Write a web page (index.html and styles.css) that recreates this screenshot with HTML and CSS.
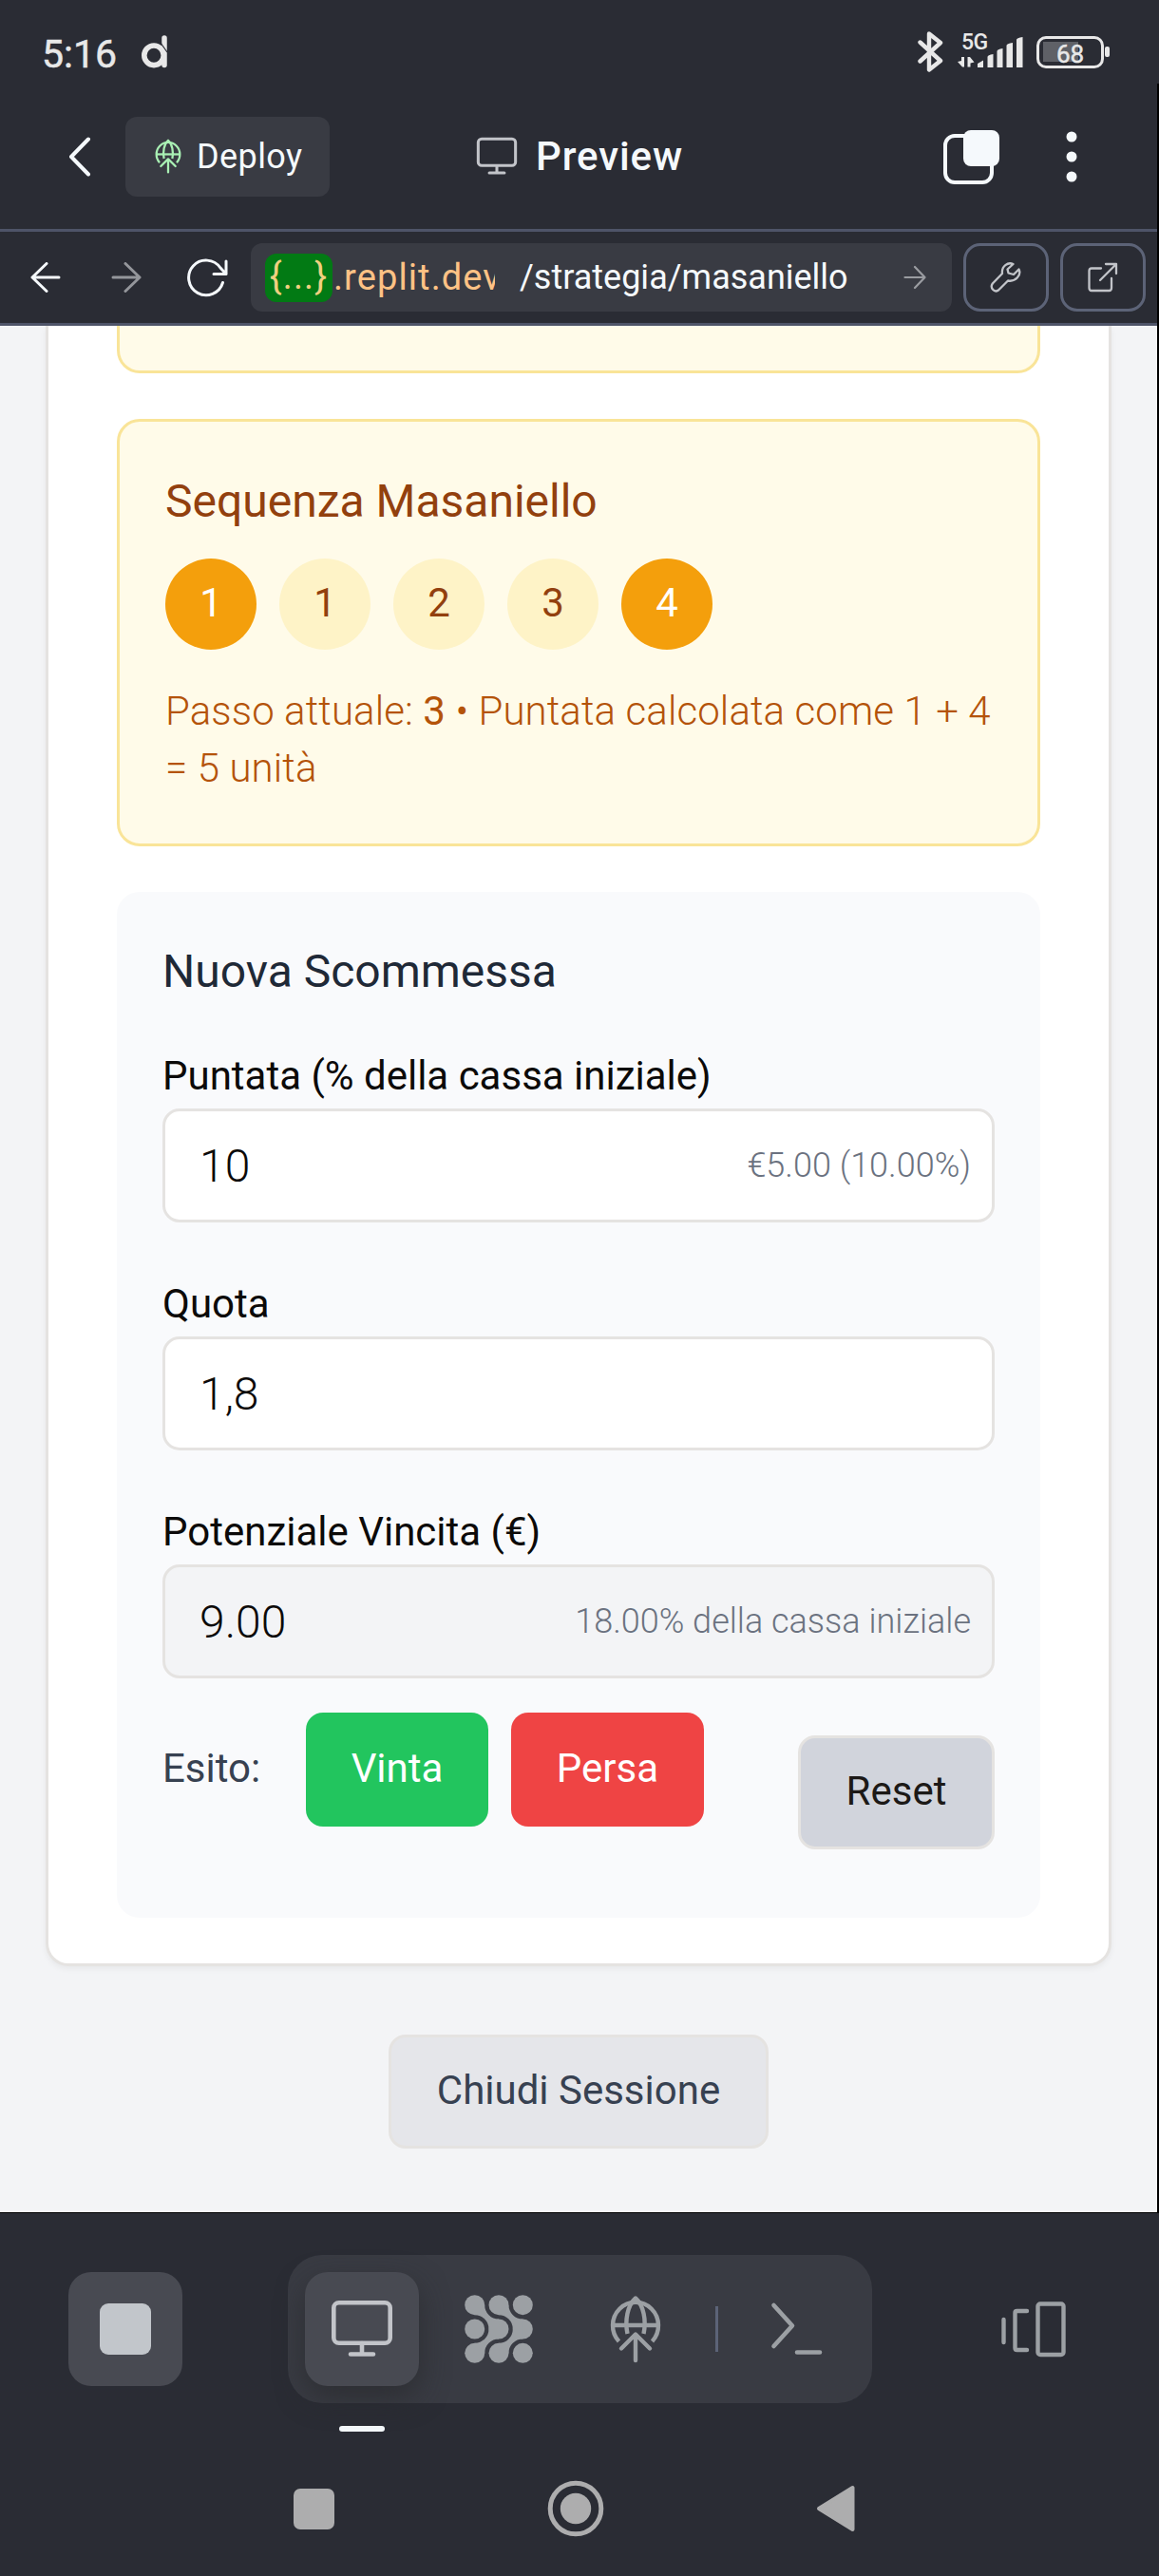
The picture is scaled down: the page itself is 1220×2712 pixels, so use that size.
FILE: index.html
```html
<!DOCTYPE html>
<html lang="it">
<head>
<meta charset="utf-8">
<title>Preview</title>
<link rel="stylesheet" href="styles.css">
</head>
<body>
<svg class="defs" width="0" height="0" aria-hidden="true">
  <symbol id="deploy" viewBox="0 0 54 72">
    <g fill="none" stroke="currentColor" stroke-width="4.400" stroke-linecap="round" stroke-linejoin="round">
      <path d="M9.500 49A24 24.500 0 1 1 44.500 49" stroke-linecap="butt"/>
      <path d="M3 32H51" stroke-linecap="butt"/>
      <path d="M18.500 41C15.500 27 18.500 11 27 3.500C35.500 11 38.500 27 35.500 41" stroke-linecap="butt"/>
      <path d="M27 69V42M12 56.500L27 41.500L42 56.500"/>
    </g>
  </symbol>
  <symbol id="monitor" viewBox="0 0 66 62">
    <g fill="none" stroke="currentColor" stroke-width="4.600" stroke-linecap="round">
      <rect x="3.300" y="3.300" width="59.400" height="42.500" rx="5.500"/>
      <path d="M33 46V57M21 57.500H45"/>
    </g>
  </symbol>
</svg>

<div class="statusbar">
  <span class="clock">5:16</span>
  <svg class="brand" width="27" height="35" viewBox="0 0 27 35"><ellipse cx="13" cy="21.300" rx="10.200" ry="10.300" fill="none" stroke="#e8e8e8" stroke-width="5.600"/><path d="M24 3V31.500" stroke="#e8e8e8" stroke-width="5.500" stroke-linecap="round"/><path d="M20 8L27 18" stroke="#2a2c34" stroke-width="1.200"/></svg>
  <div class="indicators">
    <svg width="27" height="43" viewBox="0 0 27 43"><path d="M2.500 11.500L24 31L12 40.500V2.500L24 12L2.500 31.500" fill="none" stroke="#e8e8e8" stroke-width="4.400" stroke-linejoin="round" stroke-linecap="round"/></svg>
    <div class="signal">
      <span>5G</span>
      <svg width="70" height="34" viewBox="0 0 70 34" fill="#e8e8e8"><path d="M7 22V32.500H5L0 27L4 26V22ZM10.500 22H13L17.500 27.500L13.500 28.500V32.500H10.500Z"/><path d="M21 33V29L27 25.500V33ZM31.500 33V22Q31.500 20 37.500 19V33ZM41.500 33V16Q41.500 14 47.500 13V33ZM51.500 33V10Q51.500 8 58 7V33ZM62 33V4Q62 2 68.500 1V33Z"/></svg>
    </div>
    <div class="battery"><span>68</span></div>
  </div>
</div>

<div class="app">
  <header class="topbar">
    <svg class="back" width="24" height="42" viewBox="0 0 24 42"><path d="M21 2.500L3 21L21 39.500" fill="none" stroke="#f5f9fc" stroke-width="4" stroke-linecap="round" stroke-linejoin="round"/></svg>
    <button class="deploy"><svg width="28" height="37"><use href="#deploy"/></svg>Deploy</button>
    <div class="title"><svg width="44" height="41"><use href="#monitor"/></svg>Preview</div>
    <svg class="tabs" width="60" height="60" viewBox="0 0 60 60"><rect x="2" y="8" width="49" height="49" rx="10" fill="none" stroke="#f5f9fc" stroke-width="4"/><rect x="21" y="2" width="38" height="38" rx="8" fill="#f5f9fc"/></svg>
    <svg class="more" width="12" height="56" viewBox="0 0 12 56" fill="#f5f9fc"><circle cx="6" cy="7" r="5.500"/><circle cx="6" cy="28" r="5.500"/><circle cx="6" cy="49" r="5.500"/></svg>
  </header>

  <nav class="urlbar">
    <svg class="prev" width="32" height="32" viewBox="0 0 32 32"><path d="M30 16H2M17 1.500L2 16L17 30.500" fill="none" stroke="#f5f9fc" stroke-width="3" stroke-linecap="round" stroke-linejoin="round"/></svg>
    <svg class="next" width="32" height="32" viewBox="0 0 32 32"><path d="M2 16H30M15 1.500L30 16L15 30.500" fill="none" stroke="#94969b" stroke-width="3" stroke-linecap="round" stroke-linejoin="round"/></svg>
    <svg class="reload" width="46" height="42" viewBox="0 0 46 42"><path d="M39.500 26.500A18.300 18.300 0 1 1 37 11L43 17.500M43 4V17.500H30" fill="none" stroke="#f5f9fc" stroke-width="3" stroke-linecap="round" stroke-linejoin="round"/></svg>
    <div class="field">
      <div class="host"><span class="pill">{...}</span><span>.replit.dev</span></div>
      <span class="path">/strategia/masaniello</span>
      <svg width="24" height="28" viewBox="0 0 24 28"><path d="M1.500 14H22.500M12 3L22.500 14L12 25" fill="none" stroke="#9a9ca1" stroke-width="2.200" stroke-linecap="round" stroke-linejoin="round"/></svg>
    </div>
    <button class="tool"><svg width="34" height="34" viewBox="0 0 34 34"><path d="M24.500 3C19 .500 12 5 13 13L2.800 23.500C-.300 28 4.500 33.500 9 30.500L19 20.500C27 22 33.500 14.500 30.500 8.500L25 14L19.500 12.500L18.500 8.500Z" fill="none" stroke="#c2c4c9" stroke-width="2.300" stroke-linejoin="round"/></svg></button>
    <button class="tool"><svg width="34" height="34" viewBox="0 0 34 34"><path d="M15 7.500H5Q2.500 7.500 2.500 10V28Q2.500 31 5 31H23.500Q26 31 26 28V18M20 3H31V13M31 3L14 20" fill="none" stroke="#c2c4c9" stroke-width="2.300" stroke-linecap="round" stroke-linejoin="round"/></svg></button>
  </nav>

  <main class="page">
    <section class="card">
      <div class="panel previous"></div>

      <div class="panel sequence">
        <h3>Sequenza Masaniello</h3>
        <div class="steps">
          <span class="step on">1</span><span class="step">1</span><span class="step">2</span><span class="step">3</span><span class="step on">4</span>
        </div>
        <p>Passo attuale: <b>3</b> • Puntata calcolata come 1 + 4 = 5 unità</p>
      </div>

      <form class="bet">
        <h3>Nuova Scommessa</h3>
        <label>Puntata (% della cassa iniziale)</label>
        <div class="input"><span>10</span><small>€5.00 (10.00%)</small></div>
        <label>Quota</label>
        <div class="input"><span>1,8</span></div>
        <label>Potenziale Vincita (€)</label>
        <div class="input readonly"><span>9.00</span><small>18.00% della cassa iniziale</small></div>
        <div class="actions">
          <span class="outcome">Esito:</span>
          <button type="button" class="btn win">Vinta</button>
          <button type="button" class="btn lose">Persa</button>
          <button type="button" class="btn reset">Reset</button>
        </div>
      </form>
    </section>
    <button class="btn close">Chiudi Sessione</button>
  </main>
</div>

<footer class="dock">
  <button class="stop"><i></i></button>
  <div class="group">
    <div class="tab active"><svg width="66" height="62"><use href="#monitor"/></svg></div>
    <div class="tab"><svg width="72" height="72" viewBox="0 0 72 72" fill="#9ca0a4">
      <circle cx="10.700" cy="10.700" r="10.500"/><circle cx="36" cy="10.700" r="10.500"/><circle cx="61.300" cy="10.700" r="10.500"/>
      <circle cx="10.700" cy="36" r="10.500"/><circle cx="36" cy="36" r="10.500"/><circle cx="61.300" cy="36" r="10.500"/>
      <circle cx="10.700" cy="61.300" r="10.500"/><circle cx="36" cy="61.300" r="10.500"/><circle cx="61.300" cy="61.300" r="10.500"/>
      <path d="M21.200 10.700A14.800 14.800 0 0 0 36 25.500V46.500A14.800 14.800 0 0 0 21.200 61.300L10.700 50.800A14.800 14.800 0 0 0 10.700 21.200Z"/>
      <path d="M46.500 10.700A14.800 14.800 0 0 0 61.300 25.500V46.500A14.800 14.800 0 0 0 46.500 61.300L36 50.800A14.800 14.800 0 0 0 36 21.200Z"/>
    </svg></div>
    <div class="tab third"><svg width="54" height="72"><use href="#deploy"/></svg></div>
    <i class="divider"></i>
    <svg class="shell" width="56" height="58" viewBox="0 0 56 58"><path d="M3.500 4L23 25.500L3.500 47M28 53.500H52" fill="none" stroke="#9ca0a4" stroke-width="4.600" stroke-linecap="round" stroke-linejoin="round"/></svg>
  </div>
  <svg class="devices" width="70" height="60" viewBox="0 0 70 60"><path d="M3.500 20V44M28 11H17.500Q15.500 11 15.500 13V50Q15.500 52 17.500 52H28" fill="none" stroke="#9ca0a4" stroke-width="4.400" stroke-linecap="round"/><rect x="39.500" y="3.500" width="27" height="53.500" rx="2.500" fill="none" stroke="#9ca0a4" stroke-width="4.400"/></svg>
</footer>
<div class="marker"></div>
<div class="sysnav">
  <i class="recent"></i>
  <svg class="home" width="60" height="60" viewBox="0 0 60 60"><circle cx="30" cy="30" r="26.800" fill="none" stroke="#adadae" stroke-width="5"/><circle cx="30" cy="30" r="16.200" fill="#adadae"/></svg>
  <svg width="42" height="50" viewBox="0 0 42 50"><path d="M38.500 3V47L3 25Z" fill="#adadae" stroke="#adadae" stroke-width="4" stroke-linejoin="round"/></svg>
</div>
</body>
</html>
```
FILE: styles.css
```css
* { box-sizing: border-box; }
body {
  margin: 0;
  width: 1220px;
  height: 2712px;
  overflow: hidden;
  background: #2a2c34;
  font-family: Roboto, "Liberation Sans", sans-serif;
  font-weight: 300;
}
button { font: inherit; margin: 0; padding: 0; border: 0; }
svg, i { display: block; flex: none; }
.defs { position: absolute; }

/* Phone status bar */
.statusbar { height: 88px; padding: 0 58px 0 44px; display: flex; align-items: flex-start; color: #e8e8e8; }
.clock { margin-top: 27px; font-size: 41px; line-height: 60px; font-weight: 400; -webkit-text-stroke: .5px #e8e8e8; width: 105px; white-space: nowrap; }
.brand { margin-top: 37px; }
.indicators { margin-left: auto; display: flex; align-items: flex-start; padding-top: 33px; }
.signal { position: relative; margin: 5px 0 0 15px; width: 70px; height: 34px; }
.signal span { position: absolute; left: 4px; top: -5px; font-size: 23px; line-height: 24px; font-weight: 500; letter-spacing: -.5px; }
.battery { position: relative; margin: 5px 0 0 13px; width: 71px; height: 34px; border: 3.500px solid #e8e8e8; border-radius: 10px; background: linear-gradient(#5f6167, #5f6167) 4px 3px / 37px 21px no-repeat; }
.battery::after { content: ""; position: absolute; right: -9px; top: 8px; width: 5px; height: 11px; border-radius: 2px; background: #e8e8e8; }
.battery span { display: block; text-align: center; font-size: 26px; line-height: 33px; font-weight: 400; -webkit-text-stroke: .5px #e8e8e8; }

/* Workspace header */
.app { width: 1220px; height: 2242px; border-right: 2px solid #000; border-bottom: 1px solid #000; display: flex; flex-direction: column; }
.topbar { height: 156px; padding: 0 90px 0 72px; border-bottom: 3px solid #4e5468; display: flex; align-items: center; color: #f5f9fc; flex: none; }
.deploy { margin-left: 36px; width: 215px; height: 84px; border-radius: 12px; background: #393b43; color: #f5f9fc; font-size: 36px; font-weight: 400; letter-spacing: .4px; display: flex; align-items: center; padding-left: 31px; gap: 16px; }
.deploy svg { color: #a9f0b4; }
.title { margin-left: 154px; display: flex; align-items: center; gap: 19px; font-size: 42px; font-weight: 500; letter-spacing: .9px; }
.title svg { color: #c2c4c9; }
.tabs { margin-left: auto; }
.more { margin-left: 69px; margin-right: -6px; }

.urlbar { height: 99px; flex: none; border-bottom: 3px solid #4e5468; display: flex; align-items: center; padding: 0 12px 0 32px; }
.next { margin-left: 53px; }
.reload { margin-left: 46px; margin-right: 23px; }
.field { width: 738px; height: 72px; border-radius: 12px; background: #393b43; display: flex; align-items: center; padding-left: 15px; color: #f5f9fc; font-weight: 400; white-space: nowrap; }
.host { width: 242px; overflow: hidden; display: flex; align-items: center; gap: 1px; color: #ffc285; font-size: 38px; letter-spacing: 1.1px; }
.pill { width: 71px; height: 51px; line-height: 49px; text-align: center; border-radius: 12px; background: #027a14; color: #f0d080; flex: none; }
.path { margin-left: 26px; width: 404px; font-size: 36px; }
.tool { margin-left: 12px; width: 90px; height: 72px; border: 3px solid #5c6377; border-radius: 18px; background: none; display: flex; align-items: center; justify-content: center; flex: none; }

/* Previewed page */
.page { flex: 1; overflow: hidden; background: #f3f4f6; display: flex; flex-direction: column; align-items: center; }
.card { width: 1122px; height: 1727px; flex: none; background: #fff; border: 3px solid #e5e3e1; border-top: 0; border-radius: 0 0 24px 24px; box-shadow: 0 3px 6px rgba(0, 0, 0, .05); padding: 0 72px 48px; }
.panel { border: 3px solid #f9e498; border-radius: 24px; background: #fffbe9; }
.previous { height: 50px; border-top: 0; border-radius: 0 0 24px 24px; margin-bottom: 48px; }
.sequence { height: 450px; padding: 48px; margin-bottom: 48px; color: #92400e; }
h3 { margin: 0; font-size: 48px; line-height: 72px; font-weight: 400; }
.steps { display: flex; gap: 24px; margin: 24px 0 35px; }
.step { width: 96px; height: 96px; border-radius: 50%; background: #fef3c7; font-size: 42px; line-height: 93px; font-weight: 400; text-align: center; }
.step.on { background: #f49f0c; color: #fff; }
.sequence p { margin: 0; font-size: 42px; line-height: 60px; color: #b45309; letter-spacing: .1px; }
.sequence b { font-weight: 400; }

.bet { height: 1080px; padding: 48px; border-radius: 24px; background: #f9fafc; color: #1f2937; }
.bet h3 { margin-bottom: 44px; }
.bet label { display: block; height: 60px; margin-bottom: 4px; font-size: 42px; line-height: 60px; font-weight: 400; color: #0c0a09; }
.input { height: 120px; margin-bottom: 56px; padding: 0 22px 0 36px; border: 3px solid #e5e3e1; border-radius: 18px; background: #fff; display: flex; align-items: center; justify-content: space-between; font-size: 48px; color: #0c0a09; }
.input small { font-size: 36px; color: #6b7280; }
.input.readonly { background: #f3f4f6; margin-bottom: 36px; }
.actions { display: flex; align-items: flex-start; gap: 24px; }
.outcome { width: 127px; font-size: 42px; font-weight: 400; line-height: 117px; color: #374151; }
.btn { height: 120px; padding-bottom: 3px; border-radius: 18px; font-size: 42px; font-weight: 400; color: #fff; flex: none; white-space: nowrap; }
.win { width: 192px; background: #22c55e; }
.lose { width: 203px; background: #ef4444; }
.reset { width: 207px; margin: 24px 0 0 auto; border: 3px solid #e5e3e1; background: #d1d4dc; color: #1c1917; }
.close { margin-top: 72px; width: 400px; border: 3px solid #e5e3e1; background: #e5e6ea; color: #374151; }

/* Workspace dock */
.dock { padding: 44px 97px 0 72px; display: flex; align-items: center; }
.stop, .tab { width: 120px; height: 120px; border-radius: 24px; display: flex; align-items: center; justify-content: center; color: #9ca0a4; }
.stop, .active { background: #484a52; }
.stop i { width: 54px; height: 54px; border-radius: 9px; background: #c2c6cb; }
.group { margin-left: 111px; width: 615px; height: 156px; border-radius: 36px; background: #393b43; display: flex; align-items: center; padding-left: 18px; gap: 24px; }
.active { box-shadow: 0 12px 30px rgba(40, 42, 44, .7); color: #c2c4c9; }
.divider { width: 3px; height: 48px; background: #5c6377; }
.shell { margin-left: 31px; }
.devices { margin-left: auto; }
.marker { margin: 24px 0 0 357px; width: 48px; height: 6px; border-radius: 3px; background: #f5f9fc; }
.sysnav { display: flex; align-items: center; padding: 51px 0 0 309px; }
.recent { width: 43px; height: 43px; border-radius: 7px; background: #adadae; }
.home { margin: 0 223px 0 224px; }
```
